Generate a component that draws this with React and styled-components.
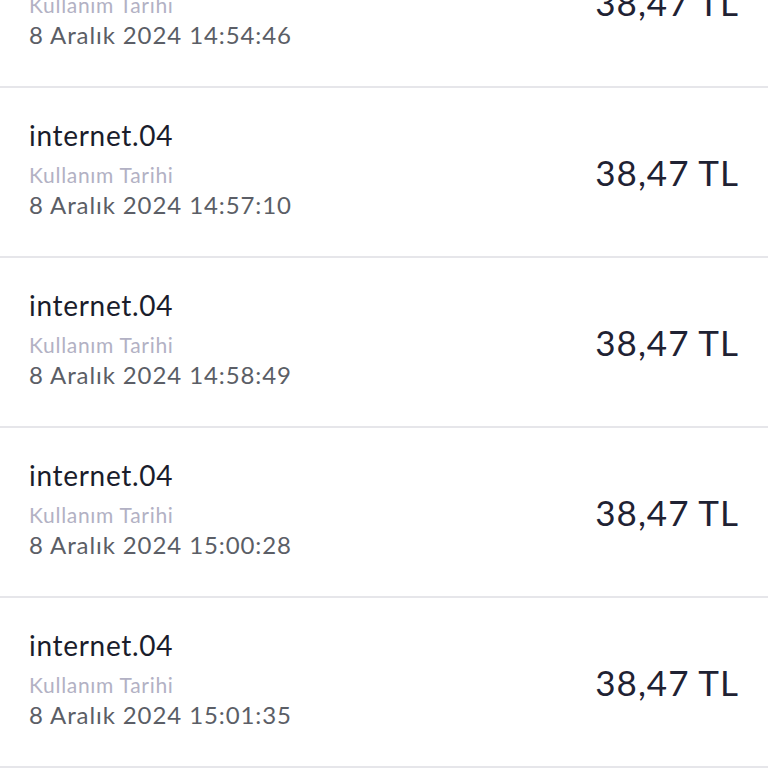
import React from "react";
import styled, { createGlobalStyle } from "styled-components";

const GlobalStyle = createGlobalStyle`
  html, body {
    margin: 0;
    padding: 0;
    background: #ffffff;
    overflow: hidden;
  }
  body {
    font-family: "Lato", "Noto Sans", sans-serif;
  }
`;

const Screen = styled.div`
  width: 768px;
  height: 768px;
  overflow: hidden;
  background: #ffffff;
`;

// list is scrolled a bit, first row is cut off at the top
const List = styled.div`
  display: flex;
  flex-direction: column;
  margin-top: -82px;
`;

const Row = styled.div`
  display: flex;
  align-items: center;
  justify-content: space-between;
  height: 168px;
  padding: 0 29px 0 29px;
  border-bottom: 2px solid #e6e6ea;
`;

const Info = styled.div`
  display: flex;
  flex-direction: column;
  padding-top: 30px;
  padding-bottom: 36px;
  align-self: stretch;
  box-sizing: border-box;
`;

const Title = styled.div`
  font-size: 28px;
  line-height: 34px;
  letter-spacing: 0.7px;
  color: #1a1d2c;
`;

const Label = styled.div`
  margin-top: 8px;
  font-size: 21px;
  line-height: 30px;
  letter-spacing: 0.7px;
  color: #b2b1c4;
`;

const DateText = styled.div`
  font-size: 24px;
  line-height: 30px;
  letter-spacing: 0.9px;
  color: #5b5e66;
`;

const Amount = styled.div`
  font-size: 35px;
  line-height: 40px;
  letter-spacing: 1px;
  color: #1f2233;
`;

const items = [
  "8 Aralık 2024 14:54:46",
  "8 Aralık 2024 14:57:10",
  "8 Aralık 2024 14:58:49",
  "8 Aralık 2024 15:00:28",
  "8 Aralık 2024 15:01:35",
];

export default function App() {
  return (
    <Screen>
      <GlobalStyle />
      <List>
        {items.map((date) => (
          <Row key={date}>
            <Info>
              <Title>internet.04</Title>
              <Label>Kullanım Tarihi</Label>
              <DateText>{date}</DateText>
            </Info>
            <Amount>38,47 TL</Amount>
          </Row>
        ))}
      </List>
    </Screen>
  );
}
